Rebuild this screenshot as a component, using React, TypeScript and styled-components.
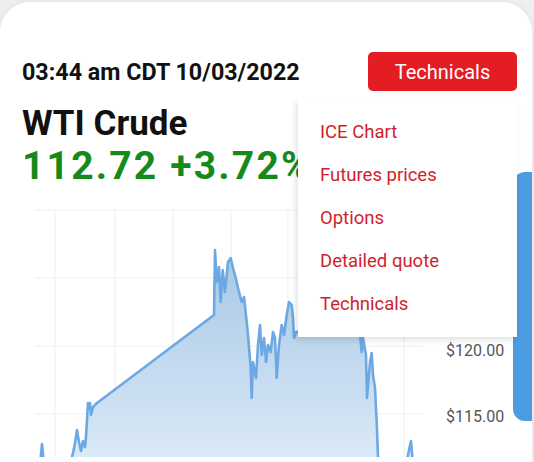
import React from "react";
import styled, { createGlobalStyle } from "styled-components";

const Global = createGlobalStyle`
  html, body { margin: 0; padding: 0; }
  body {
    background: #efefef;
    font-family: Roboto, "Noto Sans", "Liberation Sans", sans-serif;
    overflow: hidden;
    width: 534px;
    height: 462px;
  }
`;

const Card = styled.div`
  position: relative;
  margin-top: 2px;
  width: 532px;
  height: 470px;
  background: #ffffff;
  border-radius: 30px 30px 0 0;
  box-shadow: 0 0 6px rgba(0, 0, 0, 0.07);
  overflow: hidden;
`;

const Header = styled.div`
  display: flex;
  align-items: center;
  justify-content: space-between;
  padding: 50px 15px 0 22px;
`;

const Stamp = styled.div`
  font-size: 23.3px;
  font-weight: 700;
  color: #111;
`;

const RedButton = styled.button`
  width: 149px;
  height: 39px;
  border: none;
  border-radius: 5px;
  background: #e41d25;
  color: #fff;
  font-family: Roboto, "Liberation Sans", sans-serif;
  font-size: 20px;
  font-weight: 400;
  padding: 0;
`;

const Info = styled.div`
  padding: 13px 0 0 22px;
`;

const Title = styled.div`
  font-size: 35px;
  font-weight: 700;
  color: #111;
  line-height: 40px;
`;

const Price = styled.div`
  font-size: 39px;
  font-weight: 700;
  letter-spacing: 2.2px;
  color: #158a1b;
  line-height: 44px;
  white-space: nowrap;
`;

const ChartBox = styled.div`
  margin-top: 7px;
  width: 532px;
  height: 262px;
`;

const Menu = styled.div`
  position: absolute;
  left: 298px;
  top: 98px;
  width: 219px;
  height: 237px;
  background: #fff;
  box-shadow: -2px 3px 6px rgba(0, 0, 0, 0.12);
  display: flex;
  flex-direction: column;
  padding-top: 10px;
  box-sizing: border-box;
  z-index: 2;
`;

const MenuItem = styled.div`
  height: 43px;
  display: flex;
  align-items: center;
  padding-left: 22px;
  font-size: 18.5px;
  color: #cf1f2d;
`;

const SideTab = styled.div`
  position: absolute;
  left: 513px;
  top: 170px;
  width: 30px;
  height: 249px;
  background: #4b9ce0;
  border-radius: 12px 0 0 12px;
  z-index: 1;
`;

const linePath =
  "M 35 470 L 40 470 L 42 449 L 44 470 L 70 470 L 73 458 L 75 448 L 77 435 L 79 447 L 81 456 L 83 446 L 85 452 L 86 442 L 88 408 L 89 414 L 90 408 L 91 420 L 93 412 L 97 408 " +
  "L 214 320 L 215 255 L 216.7 287 L 219 272 L 220.7 307 L 222.7 275 L 225 297 L 228 267 L 230.7 263 L 233 273 L 235 280 L 238 293 L 241.7 307 L 244 302 L 246.7 327 L 248 340 L 250.7 373 L 251.7 403 L 253 367 L 256 383 L 258 350 L 260 330 L 261.7 360 L 264 343 L 266 367 L 268 350 L 270.7 357 L 273 337 L 275 343 L 276.7 383 L 279 350 L 281.7 330 L 284 340 L 286.7 320 L 289 307 L 291.7 310 L 293 323 L 294 343 L 296 337 " +
  "L 356.7 337 L 360 340 L 361.7 357 L 363 343 L 366 360 L 367 403 L 370 367 L 371.7 358 L 373 380 L 375 393 L 376.7 427 L 378 462 L 380 470 L 406 470 L 409 455 L 411 446 L 413 470";

const Chart: React.FC = () => {
  const vx = [55, 115, 173, 231, 288, 346, 404];
  const hy = [215, 283, 351, 419];
  return (
    <svg width="532" height="262" viewBox="0 200 532 262">
      <defs>
        <linearGradient id="fillg" gradientUnits="userSpaceOnUse" x1="0" y1="255" x2="0" y2="462">
          <stop offset="0" stopColor="#a7c7e5" />
          <stop offset="1" stopColor="#dae9f7" />
        </linearGradient>
      </defs>
      {vx.map((x) => (
        <line key={x} x1={x} y1={215} x2={x} y2={470} stroke="#eef0f3" strokeWidth="1.2" />
      ))}
      {hy.map((y) => (
        <line key={y} x1={35} y1={y} x2={423} y2={y} stroke="#eef0f3" strokeWidth="1.2" />
      ))}
      <path d={linePath + " Z"} fill="url(#fillg)" />
      <path d={linePath} fill="none" stroke="#6ca9e4" strokeWidth="2.6" strokeLinejoin="round" />
      <text x="446" y="427" fontSize="16" fill="#555" fontFamily="Roboto, sans-serif">$115.00</text>
      <text x="446" y="361" fontSize="16" fill="#555" fontFamily="Roboto, sans-serif">$120.00</text>
    </svg>
  );
};

const items = ["ICE Chart", "Futures prices", "Options", "Detailed quote", "Technicals"];

export default function App() {
  return (
    <>
      <Global />
      <Card>
        <Header>
          <Stamp>03:44 am CDT 10/03/2022</Stamp>
          <RedButton>Technicals</RedButton>
        </Header>
        <Info>
          <Title>WTI Crude</Title>
          <Price>112.72 +3.72%</Price>
        </Info>
        <ChartBox>
          <Chart />
        </ChartBox>
        <Menu>
          {items.map((t) => (
            <MenuItem key={t}>{t}</MenuItem>
          ))}
        </Menu>
        <SideTab />
      </Card>
    </>
  );
}
